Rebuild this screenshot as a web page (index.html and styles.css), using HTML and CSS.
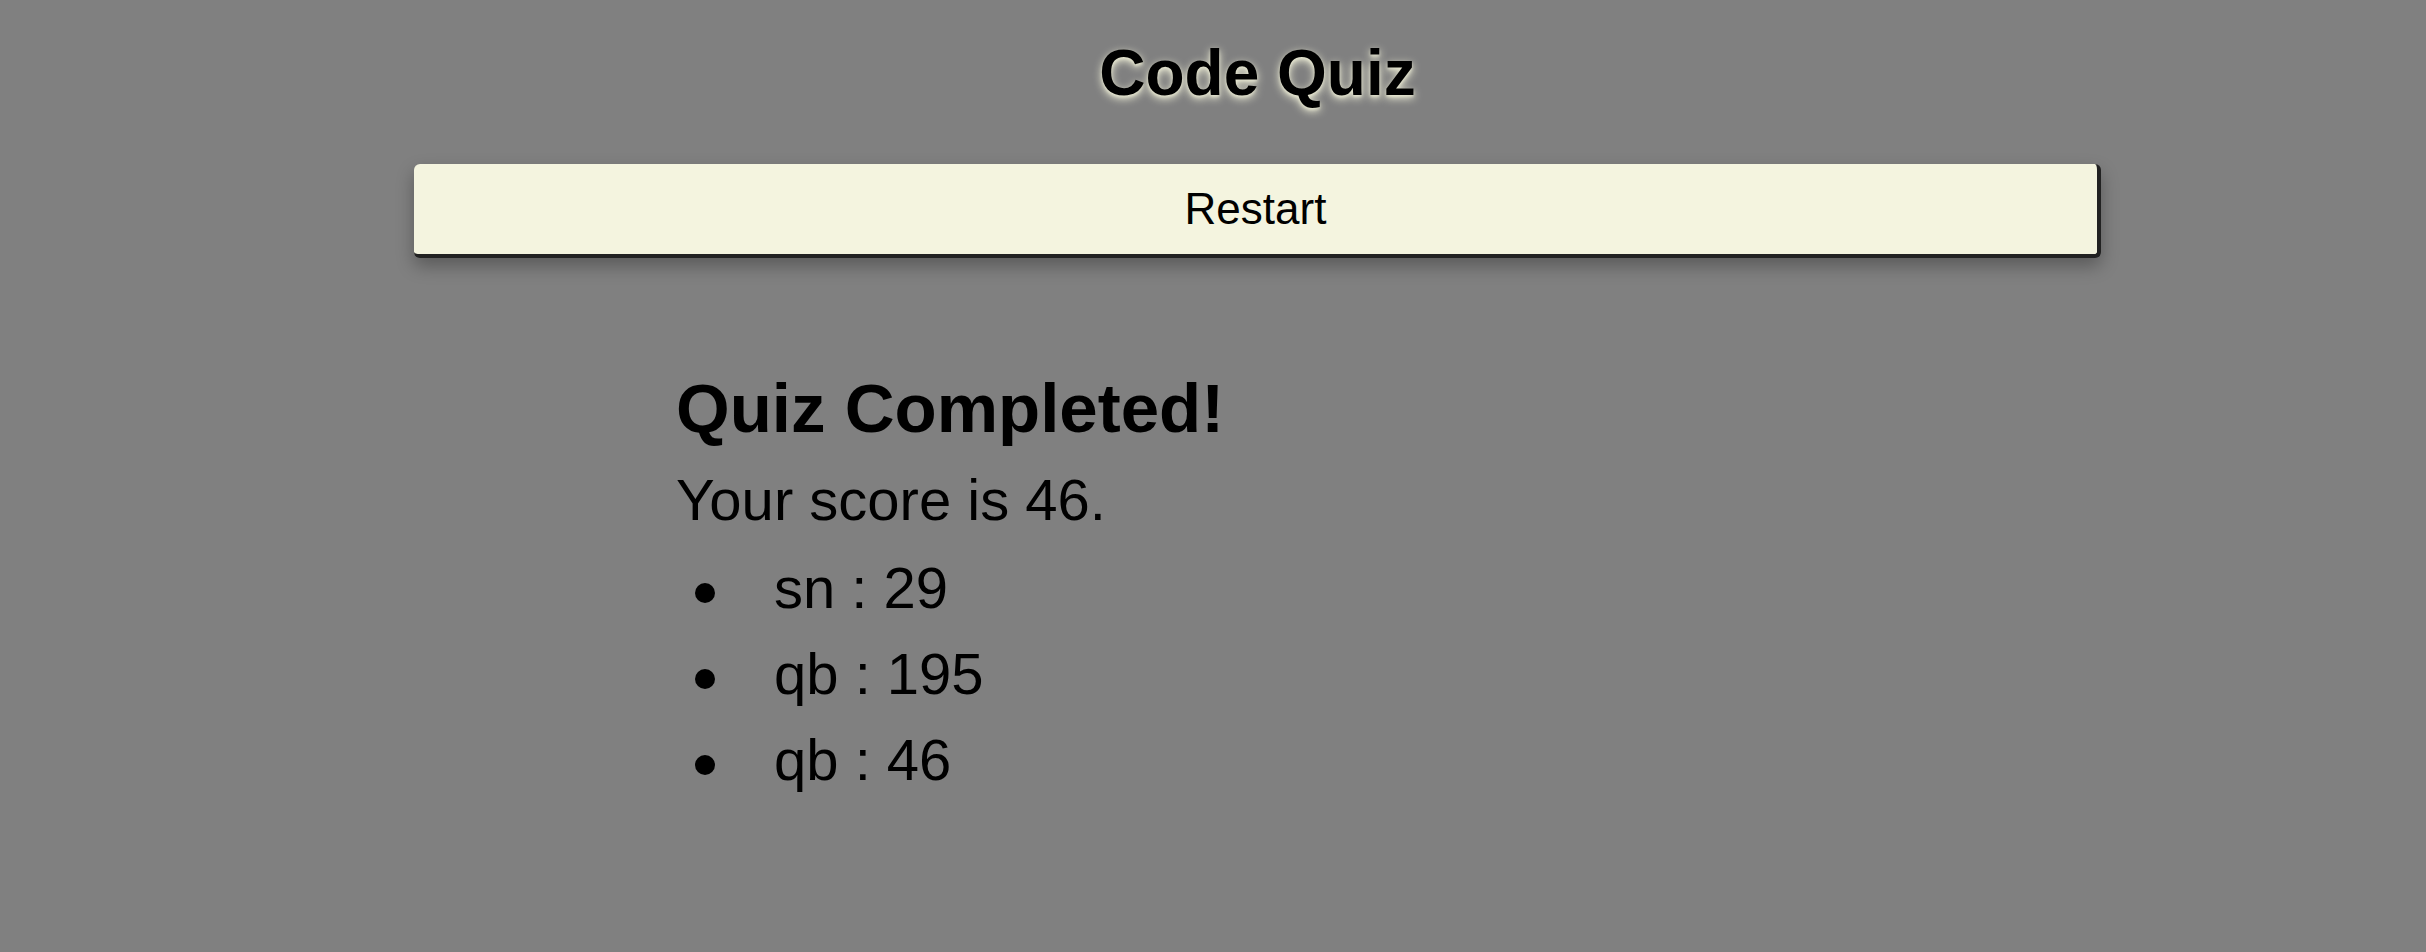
FILE: index.html
```html
<!DOCTYPE html>
<html lang="en">
<head>
<meta charset="utf-8">
<title>Code Quiz</title>
<link rel="stylesheet" href="styles.css">
</head>
<body>
<div class="page">
  <h1 class="title">Code Quiz</h1>
  <button class="restart" type="button">Restart</button>
  <section class="results">
    <h2 class="results-heading">Quiz Completed!</h2>
    <p class="score">Your score is 46.</p>
    <ul class="scores">
      <li class="score-item">sn : 29</li>
      <li class="score-item">qb : 195</li>
      <li class="score-item">qb : 46</li>
    </ul>
  </section>
</div>
</body>
</html>
```

FILE: styles.css
```css
html, body {
  margin: 0;
  padding: 0;
  background: #808080;
  height: 100%;
  overflow: hidden;
}

body {
  font-family: "Liberation Sans", Arial, sans-serif;
  color: #000;
}

.page {
  display: flex;
  flex-direction: column;
  align-items: center;
  padding-left: 89px;
}

.title {
  margin: 41px 0 0;
  font-size: 64px;
  line-height: 64px;
  font-weight: 700;
  text-shadow: 0 3px 8px #f5f5dc, 0 2px 3px rgba(245, 245, 220, 0.6);
}

.restart {
  margin-top: 59px;
  width: 1687px;
  height: 94px;
  box-sizing: border-box;
  background: #f4f4df;
  border: none;
  border-right: 4px solid #222;
  border-bottom: 4px solid #222;
  border-radius: 6px;
  box-shadow: 0 8px 18px rgba(0, 0, 0, 0.3);
  font-family: "Liberation Sans", Arial, sans-serif;
  font-size: 44px;
  line-height: 90px;
  color: #000;
  padding: 0;
}

.results {
  width: 1163px;
  margin-top: 116px;
}

.results-heading {
  margin: 0;
  font-size: 69px;
  line-height: 69px;
  font-weight: 700;
}

.score {
  margin: 28px 0 0;
  font-size: 58px;
  line-height: 58px;
}

.scores {
  list-style: none;
  margin: 16px 0 0;
  padding: 0;
}

.score-item {
  font-size: 58px;
  line-height: 86px;
}

.score-item::before {
  content: "";
  display: inline-block;
  width: 20px;
  height: 20px;
  border-radius: 50%;
  background: #000;
  vertical-align: middle;
  margin: 0 59px 0 19px;
}
```
